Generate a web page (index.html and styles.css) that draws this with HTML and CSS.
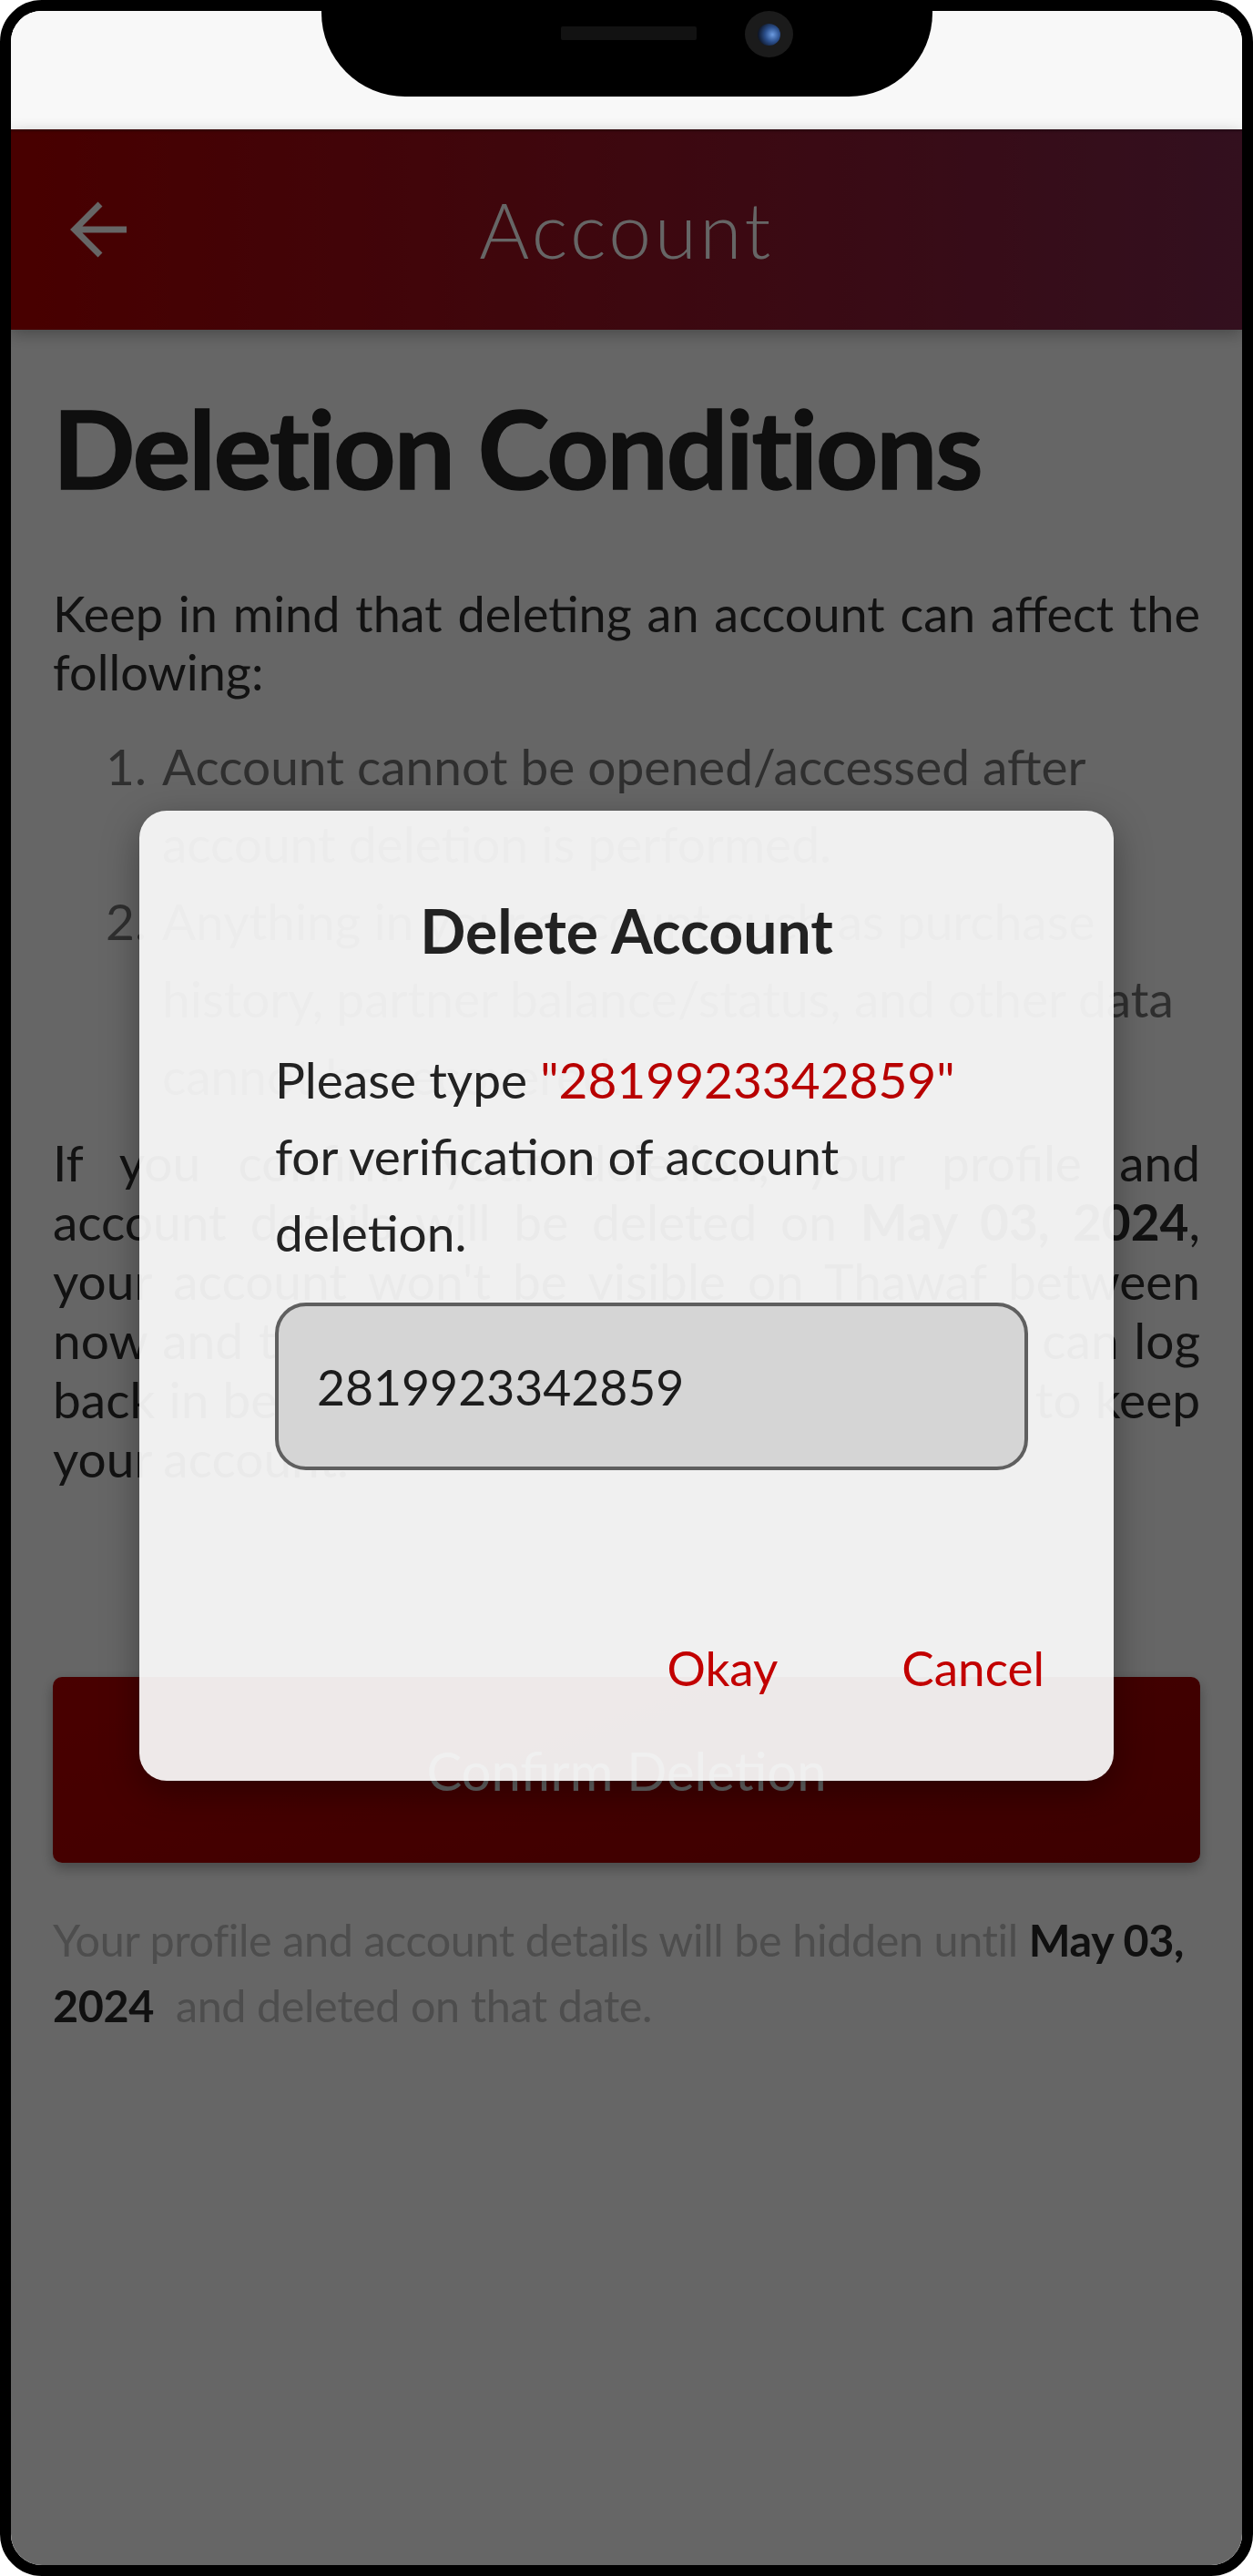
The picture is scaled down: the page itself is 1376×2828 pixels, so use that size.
FILE: index.html
```html
<!DOCTYPE html>
<html lang="en">
<head>
    <meta charset="UTF-8">
    <meta name="viewport" content="width=device-width, initial-scale=1.0">
    <title>Account - Deletion Conditions</title>
    <link rel="stylesheet" href="styles.css">
</head>
<body>
    <div class="phone">
        <div class="screen">
            <!-- status bar with the notch -->
            <div class="status-bar">
                <div class="notch">
                    <span class="speaker"></span>
                    <span class="camera"><span class="lens"></span></span>
                </div>
            </div>

            <header class="app-bar">
                <button class="back-btn" aria-label="Back">
                    <svg width="62" height="62" viewBox="0 0 62 62">
                        <path d="M33 3 L5 31 L33 59 M5 31 H62" fill="none" stroke="#fff" stroke-width="7"/>
                    </svg>
                </button>
                <h2 class="app-title">Account</h2>
                <span></span>
            </header>

            <main class="content">
                <h1 class="heading">Deletion Conditions</h1>
                <p class="lead">Keep in mind that deleting an account can affect the following:</p>
                <ol class="conditions">
                    <li><span class="num">1.</span><span>Account cannot be opened/accessed after account deletion is performed.</span></li>
                    <li><span class="num">2.</span><span>Anything in your account such as purchase history, partner balance/status, and other data cannot be recovered.</span></li>
                </ol>
                <p class="lead terms">If you confirm your deletion, your profile and account details will be deleted on <b>May 03, 2024</b>, your account won't be visible on Thawaf between now and then. If you change your mind, you can log back in before the deletion date and choose to keep your account.</p>
                <button class="confirm-btn">Confirm Deletion</button>
                <p class="note">Your profile and account details will be hidden until <b>May 03, 2024</b>&nbsp; and deleted on that date.</p>
            </main>

            <!-- dialog over the page -->
            <div class="overlay">
                <div class="dialog">
                    <h3 class="dialog-title">Delete Account</h3>
                    <p class="dialog-text">Please type <span class="code">"2819923342859"</span> for verification of account deletion.</p>
                    <input class="code-input" type="text" value="2819923342859">
                    <div class="dialog-actions">
                        <button class="action">Okay</button>
                        <button class="action">Cancel</button>
                    </div>
                </div>
            </div>
        </div>
    </div>
</body>
</html>
```

FILE: styles.css
```css
body{margin: 0; background: #fff; font-family: Lato, "Noto Sans", sans-serif;}

.phone{width: 1376px; height: 2828px; box-sizing: border-box; border: 12px solid #000; border-radius: 46px; overflow: hidden;}
.screen{position: relative; height: 100%; background: #fff; border-radius: 30px; overflow: hidden; display: flex; flex-direction: column;}

.status-bar{height: 130px; flex-shrink: 0; background: #f8f8f8; display: flex; justify-content: center;}
.notch{width: 671px; height: 94px; box-sizing: border-box; padding-left: 263px; background: #000; border-radius: 0 0 92px 92px; display: flex; align-items: flex-start; gap: 53px;}
.speaker{width: 149px; height: 15px; margin-top: 17px; background: #121212; border-radius: 2px;}
.camera{width: 53px; height: 51px; border-radius: 50%; background: #1b1b1b; display: flex; align-items: center; justify-content: center;}
.lens{width: 25px; height: 24px; border-radius: 50%; background: radial-gradient(circle at 65% 50%, #6c9be0 0%, #2b4f8c 40%, #0d1424 80%);}

.app-bar{height: 220px; flex-shrink: 0; background: linear-gradient(90deg, #b40000, #7f284d); display: grid; grid-template-columns: 1fr auto 1fr; align-items: center; box-shadow: 0 5px 16px rgba(0,0,0,0.28), inset 0 4px 3px -2px rgba(0,0,0,0.3); position: relative; z-index: 1;}
.back-btn{justify-self: start; margin-left: 65px; padding: 0; border: 0; background: none;}
.back-btn svg{display: block;}
.app-title{margin: 0; font-size: 84px; font-weight: 300; line-height: 1; letter-spacing: 3.5px; color: #fff;}

.content{padding: 59px 46px 0 46px;}
.heading{margin: 0; font-size: 119px; font-weight: 700; line-height: 140px; letter-spacing: -2px; color: #262626; -webkit-text-stroke: 1.5px #262626;}
.lead{margin: 81px 0 0; font-size: 54px; line-height: 64px; color: #2e2e2e; text-align: justify;}
.conditions{list-style: none; margin: 29px 0 0; padding: 0 0 0 58px; font-size: 55px; line-height: 85px; color: #767676;}
.conditions li{display: flex;}
.num{width: 62px; flex-shrink: 0;}
.terms{margin-top: 20px; font-size: 55px; line-height: 65px; word-spacing: -1px;}
.terms b{font-weight: 700;}

.confirm-btn{display: block; width: 100%; height: 204px; margin-top: 207px; border: 0; border-radius: 10px; background: linear-gradient(160deg, #b60000, #980000); color: #fff; font-family: Lato, sans-serif; font-size: 58px; box-shadow: 0 6px 14px rgba(0,0,0,0.3);}
.note{margin: 48px 0 0; font-size: 48.5px; line-height: 72px; letter-spacing: -0.4px; color: #c0c0c0;}
.note b{color: #2a2a2a; font-weight: 700;}

.overlay{position: absolute; top: 130px; left: 0; right: 0; bottom: 0; z-index: 2; box-sizing: border-box; padding-top: 748px; background: rgba(0,0,0,0.6); display: flex; justify-content: center; align-items: flex-start;}
.dialog{width: 1070px; height: 1065px; box-sizing: border-box; padding: 92px 76px 91px 149px; background: rgba(251,251,251,0.93); border-radius: 30px; box-shadow: 0 12px 40px rgba(0,0,0,0.35); display: flex; flex-direction: column;}
.dialog-title{margin: 0 -76px 0 -149px; font-size: 66px; font-weight: 700; line-height: 80px; text-align: center; color: #222;}
.dialog-text{width: 790px; margin: 81px 0 0; font-size: 55px; line-height: 84px; color: #222;}
.code{color: #b80000;}
.code-input{width: 827px; height: 184px; margin-top: 35px; box-sizing: border-box; padding: 0 0 0 42px; border: 4px solid #5f5f5f; border-radius: 34px; background: #d5d5d5; font-family: Lato, sans-serif; font-size: 53.5px; color: #1c1c1c; outline: none;}
.dialog-actions{margin-top: 185px; display: flex; justify-content: flex-end; gap: 136px;}
.action{padding: 0; border: 0; background: none; font-family: Lato, sans-serif; font-size: 53px; line-height: 64px; color: #c20000;}
```
